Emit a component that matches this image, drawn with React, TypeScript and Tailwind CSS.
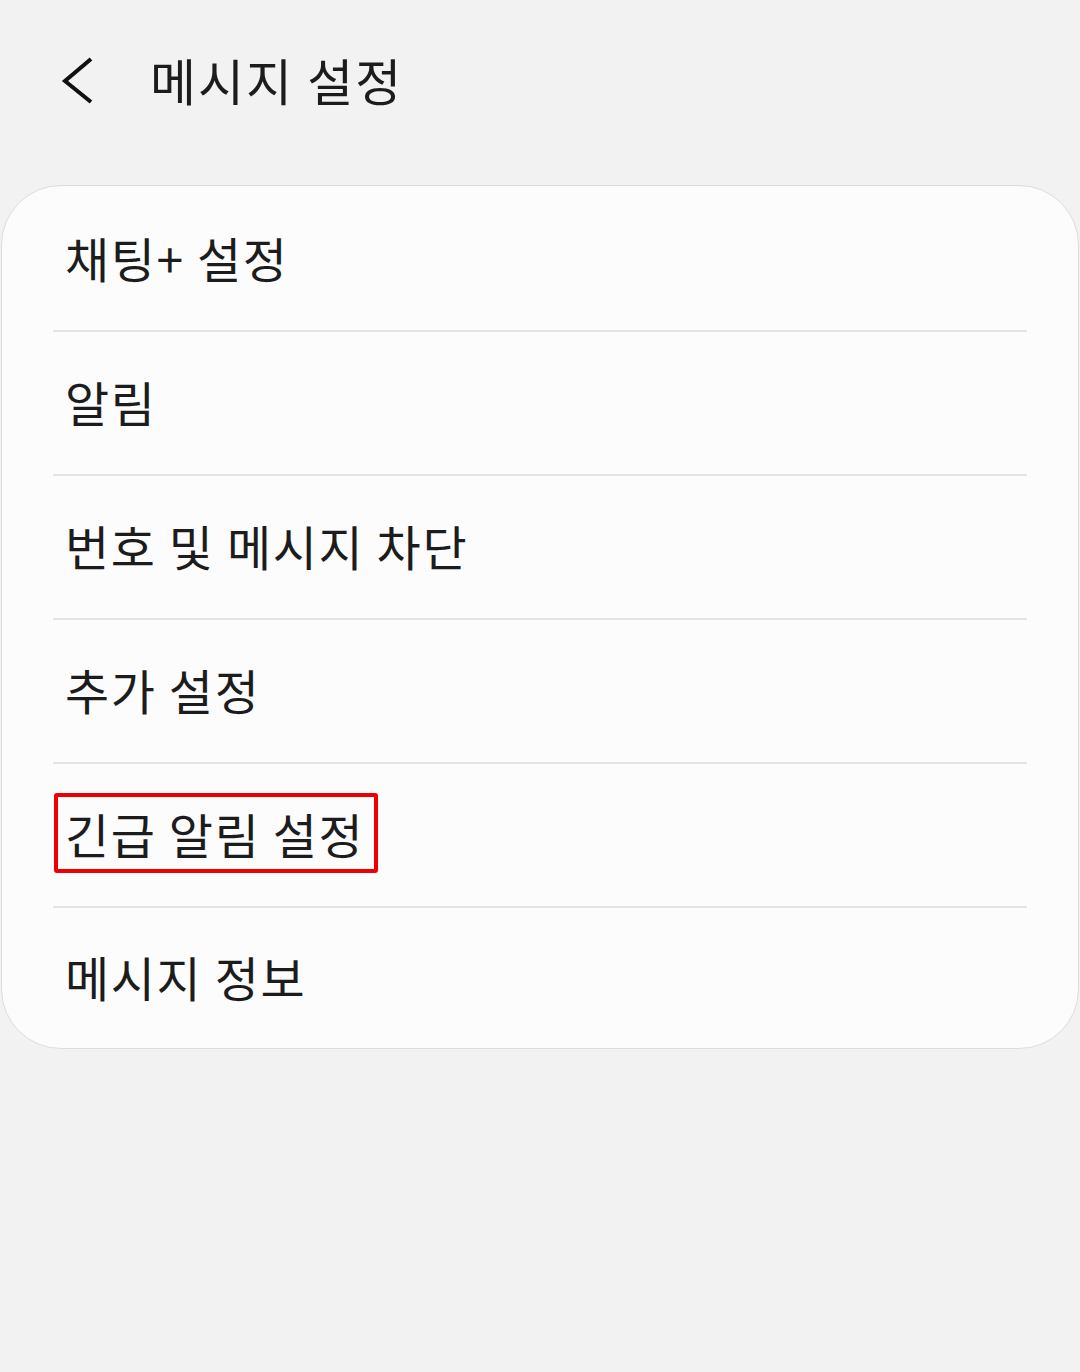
const items = [
  "채팅+ 설정",
  "알림",
  "번호 및 메시지 차단",
  "추가 설정",
  "긴급 알림 설정",
  "메시지 정보",
];

export default function App() {
  return (
    <div
      className="min-h-[1372px] w-[1080px] bg-[#f2f2f2] text-[#1c1c1c]"
      style={{ fontFamily: '"Noto Sans CJK KR", "Noto Sans", sans-serif' }}
    >
      <header className="flex h-[185px] items-start pt-[49px]">
        <button type="button" className="ml-[58px] mt-[5px] h-[50px] w-[40px]">
          <svg viewBox="0 0 40 50" className="h-[50px] w-[40px]" fill="none">
            <path d="M33 5 L7 27 L33 48" stroke="#111" strokeWidth="4" />
          </svg>
        </button>
        <h1 className="ml-[52px] text-[50px] leading-[60px] tracking-[2px]">메시지 설정</h1>
      </header>

      <div className="mx-[1px] overflow-hidden rounded-[60px] border border-[#dcdcdc] bg-[#fcfcfc] pt-[2px]">
        {items.map((label, i) => (
          <div key={label}>
            {i > 0 && <div className="mx-[51px] h-[2px] bg-[#e4e4e4]" />}
            <div
              className={
                i === items.length - 1
                  ? "flex h-[140px] items-center pb-[5px] pl-[63px]"
                  : "flex h-[142px] items-center pb-[5px] pl-[63px]"
              }
            >
              {label === "긴급 알림 설정" ? (
                <span className="-ml-[11px] rounded-[3px] border-[4px] border-[#ee0000] pl-[7px] pr-[10px] text-[48px] leading-[72px] tracking-[1.6px]">
                  {label}
                </span>
              ) : (
                <span className="text-[48px] leading-[72px] tracking-[1.6px]">{label}</span>
              )}
            </div>
          </div>
        ))}
      </div>
    </div>
  );
}
